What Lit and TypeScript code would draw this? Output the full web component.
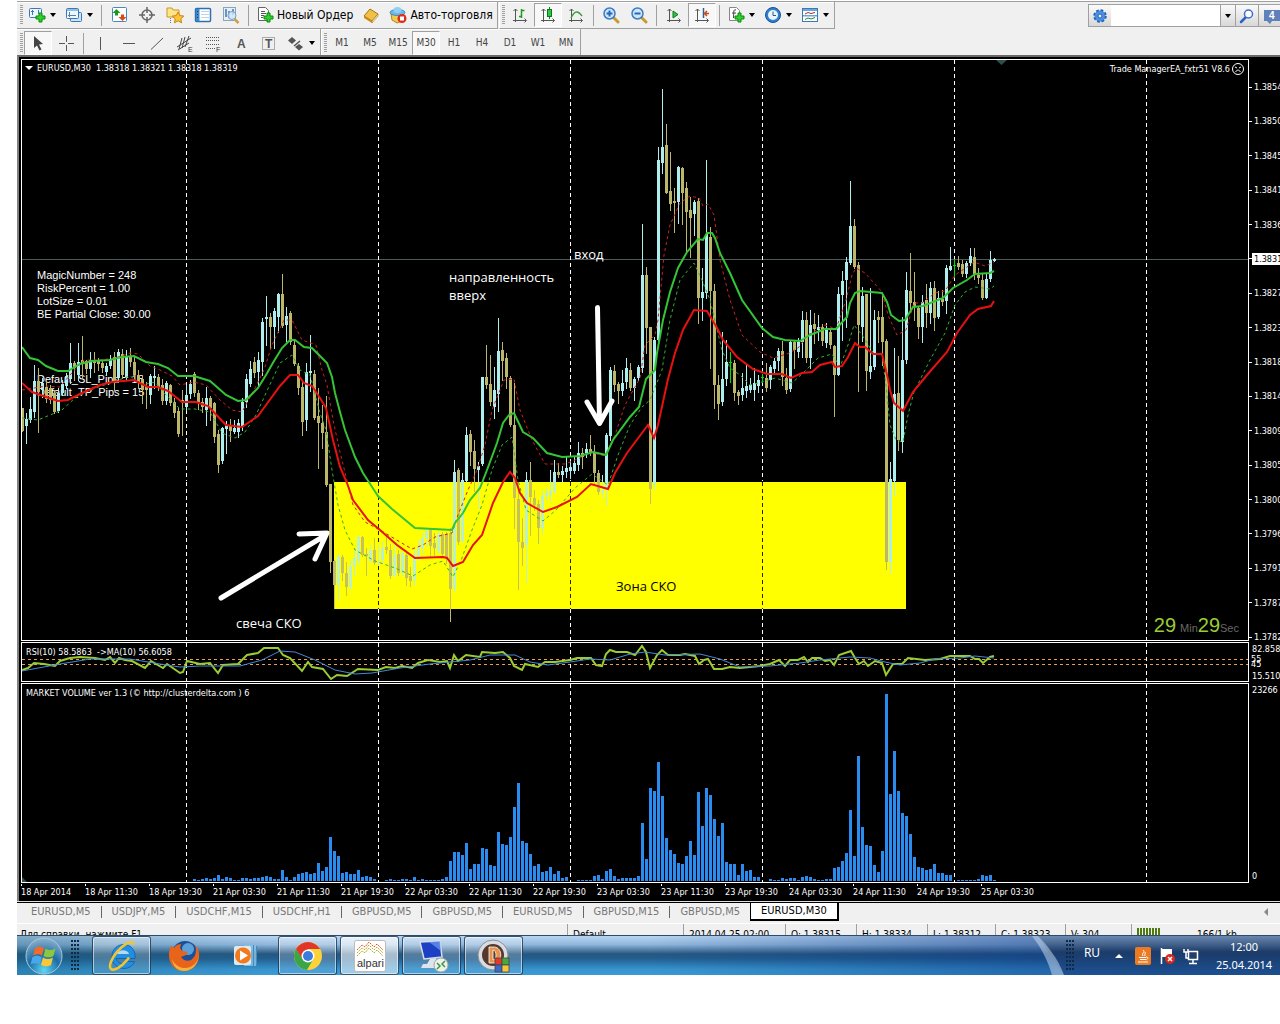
import { LitElement, html, svg, css, nothing } from "lit";
import { customElement } from "lit/decorators.js";

/* Candles as "type high top bottom low": u = rising, d = falling, n = unchanged. */
const CANDLES = `
d408 408 431 431|u413 419 426 443|u397 409 420 422|u365 381 412 417|d368 381 392 432|u378 383 390 397|d381 387 399 402|d385 388 400 403
d390 393 412 413|u388 393 411 412|u380 384 393 395|u373 376 386 388|u343 363 379 383|d361 363 368 380|u343 362 375 380|d336 360 364 378
d360 361 369 373|u352 360 369 377|d352 360 363 372|d358 361 364 370|d360 363 368 372|u363 366 372 375|u355 359 366 368|d352 357 382 390
u349 352 378 382|d349 354 375 378|u350 357 377 380|d348 356 362 366|d357 362 375 377|d370 375 382 388|d376 379 390 403|d382 386 390 408
u374 376 395 403|u366 376 378 388|d374 377 387 390|d379 385 401 404|u381 383 401 404|d384 385 403 405|d398 402 413 417|d407 411 434 436
d390 400 402 435|u385 395 407 410|u380 384 394 398|d372 374 393 396|d390 393 402 409|d398 402 407 412|u387 398 410 425|d396 398 408 420
d402 403 437 442|d430 434 465 472|u427 428 461 463|u421 425 429 453|d419 426 431 441|u420 428 432 433|u419 423 432 437|u398 402 427 430
u374 379 402 407|u361 369 384 386|d357 362 373 377|u352 360 372 385|u318 322 362 375|u296 317 319 345|d313 317 327 348|u308 311 327 348
u293 294 317 332|d274 294 326 327|u307 316 325 341|d311 313 342 344|d339 345 364 365|d363 366 388 394|d382 387 422 435|u363 372 420 430
u335 371 373 391|d370 374 418 419|d388 416 423 468|d405 423 433 448|d396 432 485 486|d484 484 562 572|d560 561 585 608|u554 556 585 600
d555 557 573 580|d562 573 587 595|u560 566 587 589|u548 558 566 575|u536 537 561 564|d536 537 555 556|d548 554 556 575|u545 550 561 562
d538 550 563 564|u545 562 563 565|u541 548 560 563|d536 547 550 553|d544 550 576 578|u545 555 576 577|d550 554 573 575|u552 553 573 575
d550 555 578 585|d567 576 581 586|u550 555 580 585|u540 547 556 560|u533 538 548 553|u529 531 538 546|d528 530 546 557|d533 543 548 555
u531 534 551 553|d532 534 554 555|d532 534 558 563|d528 533 589 621|u460 472 589 591|d468 470 542 544|u473 480 541 542|u427 435 481 481
d430 434 452 465|d440 451 469 491|u462 466 470 508|u377 377 464 465|d345 377 385 388|d355 384 402 405|u367 390 407 418|u318 351 394 411
d342 350 361 380|d353 358 377 388|d376 378 425 426|d383 425 498 528|d490 499 542 589|d518 542 548 565|u472 480 545 582|d462 480 497 535
d490 498 505 510|d500 504 528 543|u490 496 528 533|u488 493 496 500|u470 491 495 500|u460 472 492 493|d463 472 475 477|u466 471 475 482
u457 468 472 477|u462 467 471 478|u457 463 471 473|u442 453 465 470|d448 453 457 468|u443 449 453 457|d435 449 452 455|d445 453 473 485
d470 473 492 494|u475 490 493 497|u433 435 490 505|u367 370 436 440|d365 371 385 391|d382 384 391 403|u370 383 391 395|u358 368 382 388
d363 370 388 390|u377 379 388 400|u365 367 378 380|u224 275 368 372|d267 275 328 353|d327 327 489 503|u337 340 485 490|u147 160 340 345
u89 147 163 173|d124 145 193 193|d152 191 204 210|d188 201 203 232|u166 167 202 223|d167 168 193 224|d182 188 212 252|d197 210 218 257
u200 202 214 235|d198 201 298 323|u268 292 298 320|u160 234 293 298|d227 237 291 368|d284 291 385 408|d375 385 404 419|u332 379 402 405
u340 362 379 385|n352 362 363 382|d360 363 393 400|d390 392 396 404|u373 388 395 400|u365 386 391 397|u378 385 390 392|u368 383 390 400
u375 380 386 392|n374 377 378 382|d363 378 388 391|u365 367 380 388|u358 361 369 373|u348 351 361 370|d341 351 377 385|d368 378 390 393
u341 342 389 391|d341 342 350 368|u338 342 352 357|u311 320 342 357|d312 320 358 362|u310 325 358 368|d313 324 329 343|u315 327 330 340
d324 327 341 345|u323 328 343 347|d330 332 345 348|d345 346 375 416|u287 294 375 375|u271 281 295 340|u257 262 280 327|u181 226 263 264
d219 226 267 268|d262 265 325 391|u287 296 327 341|d294 294 371 390|u288 366 372 378|u310 320 367 369|d311 317 320 342|d293 317 342 365
d339 341 562 569|u462 479 562 573|u348 394 481 495|d356 393 440 450|u317 360 442 452|u272 290 360 363|d253 291 303 310|d272 302 306 320
d306 308 327 338|u295 302 327 342|d284 300 313 327|u282 288 313 323|d281 288 318 330|u291 298 317 318|d290 299 302 305|u265 268 301 313
u247 266 270 270|n259 265 266 277|d256 263 267 269|d260 264 274 276|u261 263 274 277|u248 256 263 265|d248 257 275 279|d268 275 278 283
d273 280 298 299|u273 279 298 298|u251 260 279 281|u258 259 261 261`
  .trim()
  .split(/[|\n]/)
  .map((s) => ({ kind: s[0], v: s.slice(1).split(" ").map(Number) }));

const GREEN = "22,347 30,358 38,360 46,366 58,371 68,371 80,364 92,361 110,360 122,357 134,356 146,362 158,364 168,368 178,376 194,376 210,381 226,395 238,401 246,400 258,388 266,375 274,361 282,348 290,340 295,340 304,347 312,348 320,356 327,363 332,377 335,393 340,412 345,430 355,457 363,473 378,496 392,509 415,528 452,530 455,523 463,513 470,500 480,488 487,470 497,443 503,423 509,415 514,413 523,432 533,438 547,453 562,457 580,456 593,452 606,455 613,440 630,417 639,407 646,379 655,370 657,353 663,320 670,292 678,268 687,252 698,239 703,240 707,233 712,233 715,238 720,253 730,273 742,300 762,328 773,337 785,340 800,341 810,335 825,329 836,329 847,317 850,303 855,293 860,291 882,293 887,302 891,315 899,321 905,320 913,307 923,306 943,298 953,288 967,280 975,274 990,273 994,271";
const RED = "22,383 32,392 46,397 58,401 68,400 80,394 100,385 112,382 134,380 148,387 158,387 168,391 182,402 196,402 208,406 226,425 242,427 258,416 266,405 280,386 290,375 298,375 304,383 312,386 320,398 326,408 333,440 340,467 347,483 353,500 368,520 380,530 397,545 415,558 443,557 447,558 453,566 463,562 473,545 482,535 493,503 503,482 510,472 515,478 520,493 527,503 543,512 557,507 577,497 591,484 608,489 615,473 627,453 639,437 648,425 654,438 658,425 668,379 675,353 683,330 694,310 707,311 717,328 723,340 737,357 753,369 767,374 782,374 791,378 802,373 812,372 820,365 832,362 835,367 842,366 848,357 855,343 860,347 865,347 873,354 882,354 888,379 890,390 894,403 903,411 913,392 927,375 947,352 957,333 970,315 978,309 991,306 994,301";
const RED_THIN = "22,390 34,388 46,386 60,387 70,375 84,360 100,360 115,358 130,353 138,354 150,366 160,370 172,376 180,385 194,382 206,385 220,400 232,410 242,412 254,390 264,370 272,345 284,320 292,320 302,340 316,345 322,370 327,385 333,420 340,452 353,505 365,522 380,530 400,542 412,549 423,545 435,537 452,533 458,515 468,490 477,470 485,445 492,410 504,380 514,379 520,410 532,440 545,464 565,464 580,458 590,452 605,456 615,435 625,405 640,378 645,345 655,335 658,320 664,255 670,225 680,203 690,196 699,198 703,206 708,204 714,215 720,260 730,300 742,335 760,352 773,358 787,354 798,348 808,335 825,325 836,329 846,300 852,275 856,268 865,273 882,292 888,315 897,335 906,330 914,303 922,303 935,293 945,291 955,275 967,267 974,262 985,266 994,262";
const GREEN_THIN = "22,418 38,420 50,415 62,410 75,398 90,390 110,383 130,376 142,385 155,382 166,395 180,409 195,409 210,412 222,433 235,438 245,432 256,415 266,393 280,363 292,355 300,370 310,375 320,413 326,430 332,470 338,505 345,530 355,550 375,561 395,568 413,576 430,565 443,561 453,577 462,558 472,530 482,505 492,470 502,445 512,437 518,480 526,510 543,521 556,510 575,488 592,474 608,485 618,455 630,425 642,407 650,400 662,370 670,320 680,280 694,263 702,280 710,300 716,325 722,350 730,368 740,375 750,385 762,382 775,378 792,383 803,373 818,358 832,354 840,367 848,345 854,325 862,335 874,354 882,354 886,385 890,425 896,440 903,442 908,415 914,392 930,360 945,333 955,305 965,292 975,287 990,289 994,286";
const RSI = "22,670 28,668 34,663 44,664 55,666 60,661 70,658 80,657 95,658 105,660 110,657 115,663 119,658 125,660 132,661 145,668 151,661 163,668 167,664 180,673 183,672 187,661 200,664 210,663 218,673 223,665 238,664 247,655 258,653 264,648 278,648 283,655 290,658 302,671 308,662 312,667 323,669 331,679 337,675 347,676 358,669 378,670 386,667 395,668 402,666 412,668 418,663 428,660 440,662 447,661 450,668 454,655 458,661 466,655 480,657 482,652 495,653 503,652 510,658 514,666 522,670 525,664 538,667 545,662 555,662 570,660 577,658 591,658 596,665 602,666 606,654 610,650 616,652 627,652 635,655 642,646 646,652 650,668 657,655 662,650 668,655 680,655 685,654 695,656 699,664 704,660 708,659 714,669 722,669 730,667 740,668 760,666 770,664 779,660 785,666 790,660 798,660 804,657 808,662 812,658 820,658 825,661 830,660 834,665 839,655 851,651 855,658 859,664 864,661 868,666 875,661 882,663 886,675 893,664 902,664 908,658 925,660 940,659 950,656 970,656 975,659 979,659 983,663 990,657 994,656";
const RSI_MA = "22,671 60,664 90,659 130,659 160,664 180,667 200,666 240,666 262,660 280,651 295,652 315,660 335,670 355,674 372,673 400,668 430,664 450,662 470,660 490,655 515,655 530,662 548,665 570,662 590,659 610,660 630,654 645,652 665,655 700,654 720,659 740,667 770,666 800,663 820,660 850,657 870,658 885,662 900,665 920,663 935,659 960,658 975,656 994,658";

/* Bar heights of the volume histogram; the first belongs to candle 43. */
const VOLUME = [
  2, 1, 2, 3, 2, 3, 6, 2, 4, 3, 1, 1, 3, 3, 2, 3, 3, 4, 5, 4, 2, 2, 11, 4, 1, 4, 7, 8, 9, 7, 8, 18, 10, 14, 44, 30, 25, 8, 9, 7, 7, 11, 4, 5, 4, 2, 0, 0,
  1, 2, 1, 1, 2, 2, 1, 4, 1, 2, 1, 1, 1, 1, 2, 4, 20, 29, 29, 26, 38, 12, 17, 17, 33, 32, 16, 15, 49, 37, 36, 44, 74, 98, 40, 38, 27, 15, 17, 9, 10, 14, 7, 10, 3, 4, 0, 0,
  1, 1, 1, 1, 5, 6, 2, 10, 12, 5, 2, 3, 3, 3, 3, 5, 58, 22, 93, 90, 119, 85, 43, 31, 27, 18, 17, 25, 40, 26, 89, 55, 93, 86, 62, 45, 58, 19, 17, 17, 6, 17, 10, 11, 4, 4, 0, 0,
  2, 1, 1, 3, 2, 3, 3, 1, 4, 5, 4, 2, 1, 1, 2, 2, 13, 14, 20, 28, 71, 25, 125, 54, 36, 35, 16, 9, 30, 187, 87, 130, 90, 68, 65, 47, 24, 14, 13, 11, 12, 17, 8, 8, 6, 6, 0,
  1, 1, 1, 1, 1, 2, 6, 5, 6, 1,
];

const DAYS = [186, 378, 570, 762, 954, 1146];
const PRICES = ["1.3854", "1.3850", "1.3845", "1.3841", "1.3836", "1.3831", "1.3827", "1.3823", "1.3818", "1.3814", "1.3809", "1.3805", "1.3800", "1.3796", "1.3791", "1.3787", "1.3782"];
const TIMES = ["18 Apr 2014", "18 Apr 11:30", "18 Apr 19:30", "21 Apr 03:30", "21 Apr 11:30", "21 Apr 19:30", "22 Apr 03:30", "22 Apr 11:30", "22 Apr 19:30", "23 Apr 03:30", "23 Apr 11:30", "23 Apr 19:30", "24 Apr 03:30", "24 Apr 11:30", "24 Apr 19:30", "25 Apr 03:30"];
const TABS = ["EURUSD,M5", "USDJPY,M5", "USDCHF,M15", "USDCHF,H1", "GBPUSD,M5", "GBPUSD,M5", "EURUSD,M5", "GBPUSD,M15", "GBPUSD,M5", "EURUSD,M30"];
const PERIODS = ["M1", "M5", "M15", "M30", "H1", "H4", "D1", "W1", "MN"];
const FILL: Record<string, string> = { u: "#afeeee", d: "#bdb76b", n: "#00e000" };

const plus = svg`<path d="M11 7h3v3h3v3h-3v3h-3v-3h-3v-3h3z" fill="#2fd02f" stroke="#0a8a0a"/>`;
const axes = svg`<path d="M4.5 3v13M2 14.5h13M2.500 5l2-2 2 2M13.500 12.500l2 2-2 2" fill="none" stroke="#555"/>`;
const lens = svg`<path d="M11 11l5 5" stroke="#c89a30" stroke-width="3" stroke-linecap="round"/><circle cx="7.500" cy="7.500" r="5.500" fill="#cfe6fa" stroke="#3a7cc4" stroke-width="1.500"/>`;

const ICONS: Record<string, unknown> = {
  newChart: svg`<rect x="1.500" y="2.500" width="12" height="9" rx="1" fill="#eef6fd" stroke="#3a78b8"/><path d="M4.500 4v5M3 5.500h3M10.500 4v4" stroke="#3a78b8"/>${plus}`,
  profiles: svg`<rect x="5.500" y="6.500" width="11" height="9" rx="1" fill="#cfe3f6" stroke="#3a78b8"/><rect x="1.500" y="2.500" width="12" height="10" rx="1" fill="#eef6fd" stroke="#3a78b8"/><path d="M2 3h11v2H2z" fill="#8fbce8"/><path d="M4.500 6v5M3 9.500h8" stroke="#5580aa"/>`,
  market: svg`<rect x="2.500" y="1.500" width="14" height="14" rx="1" fill="#fff" stroke="#4a86c0"/><path d="M6.500 3l4 4h-2.500v2.500h-3V7H2.500z" fill="#1c9a1c"/><path d="M12.500 15l-4-4H11V8.500h3V11h2.500z" fill="#dd4a1a"/>`,
  target: svg`<circle cx="9" cy="9" r="5" fill="none" stroke="#666" stroke-width="1.500"/><path d="M9 1v6M9 11v6M1 9h6M11 9h6" stroke="#666" stroke-width="1.500"/>`,
  folder: svg`<path d="M1 2h5l1 2h6v7H1z" fill="#ffe58a" stroke="#c79a20"/><path d="M12 6l1.800 3.600 4 .5-3 2.700.8 4-3.600-2-3.500 2 .7-4-2.900-2.700 4-.5z" fill="#ffc53a" stroke="#c98408"/><path d="M4.500 12v5" stroke="#777" stroke-dasharray="1 1"/>`,
  navigator: svg`<rect x="1.500" y="2.500" width="15" height="13" rx="1" fill="#fff" stroke="#2f6fb0" stroke-width="1.500"/><path d="M2 3h3.500v12H2z" fill="#3f87cc"/><path d="M7 5.500h8M7 8.500h8M7 11.500h8" stroke="#b8d4ec"/><path d="M3.500 5v8" stroke="#123a6a" stroke-dasharray="1 2"/>`,
  tester: svg`<rect x="1.500" y="1.500" width="12" height="13" fill="#e8eef4" stroke="#8aa4bc"/><path d="M4 3v8M7 5v7M11 3v6" stroke="#3a78b8" stroke-width="1.500"/><path d="M12.500 13l4 4" stroke="#d0a040" stroke-width="2.500"/><circle cx="10" cy="9.500" r="4" fill="#cfe6fa" fill-opacity=".8" stroke="#7aa0c4"/>`,
  order: svg`<path d="M2.500 1.500h7l3 3v10h-10z" fill="#fff" stroke="#666"/><path d="M5 5.500h4M5 7.500h5M5 9.500h3M5 11.500h2" stroke="#555"/>${plus}`,
  book: svg`<path d="M2 10l6-7 8 5-6 7z" fill="#f1c04a" stroke="#a87208"/><path d="M2 10l8 5v2l-8-5z" fill="#c88d18"/><path d="M10 15l6-7v2l-6 7z" fill="#fff3c8" stroke="#a87208" stroke-width=".6"/>`,
  auto: svg`<path d="M2 8h13l-2 7-5 2-5-3z" fill="#f0ca50" stroke="#b08a18"/><ellipse cx="8.500" cy="6.500" rx="7.500" ry="3" fill="#6db8e8" stroke="#3a88c0"/><ellipse cx="8.500" cy="4" rx="4" ry="3" fill="#8fd0f4"/><circle cx="13" cy="12.500" r="4.500" fill="#d8301c"/><rect x="11" y="10.500" width="4" height="4" fill="#fff"/>`,
  bars: svg`${axes}<path d="M10.500 3v9M8 10.500h2.500M10.500 4.500h3" stroke="#1c9a1c" stroke-width="1.500"/>`,
  candles: svg`${axes}<path d="M10.500 1v12" stroke="#1c7a1c"/><rect x="8.500" y="3.500" width="4" height="7" fill="#2cc84a" stroke="#0a7a1a"/>`,
  line: svg`${axes}<path d="M4 12c3-6 6-9 11-2" fill="none" stroke="#3a9a3a" stroke-width="1.500"/>`,
  zoomIn: svg`${lens}<path d="M4.500 7.500h6M7.500 4.500v6" stroke="#2468b4" stroke-width="2"/>`,
  zoomOut: svg`${lens}<path d="M4.500 7.500h6" stroke="#2468b4" stroke-width="2"/>`,
  scroll: svg`${axes}<path d="M8 5l5 3.500-5 3.500z" fill="#34c04a" stroke="#0a7a1a"/>`,
  shift: svg`${axes}<path d="M10.500 2v10" stroke="#2a60a0" stroke-width="1.500"/><path d="M16 7.500h-4M14 5l-2.500 2.500 2.500 2.500" fill="none" stroke="#c84a1a" stroke-width="1.500"/>`,
  indicators: svg`<path d="M2.500 1.500h7l3 3v10h-10z" fill="#fff" stroke="#888"/><path d="M9 4c-3-1-2 2-2.500 8M5 7h4" fill="none" stroke="#444"/>${plus}`,
  clock: svg`<circle cx="9" cy="9" r="7.500" fill="#2f7fd0" stroke="#1a5096"/><circle cx="9" cy="9" r="5" fill="#eaf4fc"/><path d="M9 5.500V9.500h3" fill="none" stroke="#2a5a8a"/>`,
  templates: svg`<rect x="1.500" y="2.500" width="15" height="13" fill="#fff" stroke="#3a78b8"/><path d="M2 3h14v2H2zM2 9h14v1.500H2z" fill="#6aa6dc"/><path d="M4 8l3-1.500 3 1 4-1" fill="none" stroke="#a03030"/><path d="M4 13.500l3-1.500 3 1 4-1.500" fill="none" stroke="#2a8a2a"/>`,
  cursor: svg`<path d="M5 2l9 8-4 .5 2.500 5-2 1-2.500-5L5 14z" fill="#444"/>`,
  cross: svg`<path d="M9.500 2v6M9.500 11v6M2 9.500h6M11 9.500h6" stroke="#555"/>`,
  vline: svg`<path d="M8.500 3v13" stroke="#555"/>`,
  hline: svg`<path d="M3 9.500h12" stroke="#555"/>`,
  trend: svg`<path d="M3 15.500L15 4" stroke="#555"/>`,
  channel: svg`<path d="M1 13L15 4M2 16L13 9M6 4L3 15M9 3L6 14M13 2L9 13" stroke="#444"/><text x="12" y="18" class="tiny">E</text>`,
  fibo: svg`<path d="M2 3.500h14M2 6.500h14M2 10.500h14M2 14.500h9" stroke="#555" stroke-dasharray="1 1"/><text x="12" y="18" class="tiny">F</text>`,
  textA: svg`<text x="5" y="14" class="glyph">A</text>`,
  label: svg`<rect x="2.500" y="3.500" width="12" height="12" fill="none" stroke="#666" stroke-dasharray="1 1"/><text x="5" y="14" class="glyph">T</text>`,
  shapes: svg`<path d="M5 3l4 3.500-4 3.500-4-3.500z" fill="#555"/><path d="M12 10l4 3-4 3.500-4-3.500z" fill="#555"/><path d="M7 12l6-5" stroke="#555" stroke-width="1.500"/>`,
};

const icon = (name: string) => html`<svg class="icon" width="18" height="18" viewBox="0 0 18 18" aria-hidden="true">${ICONS[name]}</svg>`;
const tool = (name: string, label: string, o: { menu?: boolean; on?: boolean; text?: string } = {}) =>
  html`<button class="tool ${o.menu ? "menu" : ""} ${o.on ? "on" : ""} ${o.text ? "wide" : ""}" aria-label=${label}>${icon(name)}${o.text ? html`<span>${o.text}</span>` : nothing}${o.menu ? html`<i class="caret"></i>` : nothing}</button>`;
const sep = html`<i class="sep"></i>`;
const grip = html`<i class="grip"></i>`;
const days = (top: number, bottom: number) => DAYS.map((x) => svg`<path d="M${x + 0.5} ${top}V${bottom}" stroke="#fff" stroke-dasharray="4 3"/>`);

@customElement("app-root")
export class AppRoot extends LitElement {
  static styles = css`
    :host { display: block; background: #fff; min-height: 100vh; overflow: hidden; font: 11px/14px "DejaVu Sans Condensed", "Noto Sans", sans-serif; color: #000; }
    * { box-sizing: border-box; }
    button { font: inherit; color: inherit; border: 0; padding: 0; background: none; }
    svg { display: block; }
    .screen { margin-left: 17px; padding-top: 1px; display: flex; flex-direction: column; overflow: hidden; }
    .bars { background: #f0f0f0; border-top: 1px solid #a0a0a0; height: 54px; display: flex; justify-content: space-between; }
    .row { display: flex; height: 27px; align-items: stretch; width: max-content; }
    .group { display: flex; align-items: center; padding-left: 3px; border-right: 1px solid #a0a0a0; border-bottom: 1px solid #a0a0a0; box-shadow: inset 0 1px #fff; }
    .row.second .group { border-bottom: 0; padding-top: 1px; }
    .group + .group { border-left: 1px solid #fff; margin-left: 1px; padding-left: 2px; }
    .row.second .group + .group { margin-left: 0; }
    .grip { width: 3px; height: 20px; margin-right: 1px; background: repeating-linear-gradient(#a0a0a0 0 1px, #f0f0f0 1px 2px); }
    .sep { width: 1px; height: 21px; margin: 0 3px; background: #a0a0a0; }
    .tool { width: 28px; height: 24px; display: flex; align-items: center; justify-content: center; white-space: nowrap; }
    .tool.on { background: #f8f8f8; border: 1px solid #fff; border-top-color: #a0a0a0; border-left-color: #a0a0a0; }
    .tool.menu { width: 37px; justify-content: flex-start; padding-left: 4px; }
    .tool.menu .caret { margin-left: 4px; }
    .tool.wide { width: auto; padding: 0 4px; gap: 3px; font-size: 12px; }
    .period { color: #444; font-size: 10px; }
    .caret { border: 3px solid transparent; border-top: 4px solid #000; border-bottom: 0; width: 0; }
    .tiny { font: 7px "Liberation Sans", sans-serif; fill: #333; }
    .glyph { font: bold 12px "Liberation Sans", sans-serif; fill: #555; }
    .find { display: flex; width: 192px; height: 23px; margin-top: 2px; border: 1px solid #a0a0a0; border-right: 0; overflow: hidden; }
    .find button { flex: none; width: 22px; display: grid; place-items: center; background: linear-gradient(#fafafa, #d8d8d8); }
    .find .drop { width: 16px; border-left: 1px solid #a0a0a0; border-right: 1px solid #a0a0a0; }
    .find .chat { border-left: 1px solid #a0a0a0; justify-content: start; padding-left: 4px; }
    .find input { flex: 1; min-width: 0; border: 0; padding: 0 4px; background: #fff; font: inherit; }
    .count { font: bold 10px "Liberation Sans", sans-serif; fill: #fff; }

    .window { background: #000; color: #fff; border-top: 2px solid #696969; border-left: 2px solid #808080; padding: 2px 0 0 2px; display: flex; flex-direction: column; gap: 1px; font-size: 9px; line-height: 12px; }
    .pane { display: flex; }
    .plot { position: relative; flex: 1; min-width: 0; border: 1px solid #fff; overflow: hidden; }
    .chart { width: 100%; }
    .price .chart { height: 580px; }
    .rsi .chart { height: 38px; }
    .vol .chart { height: 198px; }
    .scale { width: 31px; flex: none; position: relative; overflow: hidden; }
    .price .scale { display: flex; flex-direction: column; justify-content: space-between; padding-top: 22px; margin-bottom: -2px; }
    .mark { display: flex; align-items: center; gap: 2px; white-space: nowrap; }
    .mark::before { content: ""; flex: none; width: 3px; height: 1px; background: #fff; }
    .mark.now { gap: 0; }
    .mark.now span { background: #fff; color: #000; padding: 0 2px; }
    .rsi .scale, .vol .scale { display: flex; flex-direction: column; justify-content: space-between; padding: 1px 0 0 3px; }
    .vol .scale { padding-bottom: 1px; }
    .level { position: absolute; left: 2px; }
    .l55 { top: 11px; }
    .l45 { top: 16px; }
    .title { position: absolute; left: 4px; top: 3px; white-space: pre; }
    .price .title { display: flex; align-items: center; gap: 4px; left: 3px; top: 2px; }
    .title .caret { border: 4px solid transparent; border-top-color: #fff; border-bottom: 0; }
    .expert { position: absolute; right: 4px; top: 3px; display: flex; gap: 2px; align-items: center; white-space: nowrap; }
    .timer { position: absolute; right: 9px; bottom: 0; font: 11px/24px "Liberation Sans", sans-serif; color: #696969; display: flex; align-items: baseline; }
    .timer b { font-weight: normal; font-size: 20px; color: #9acd32; }
    .timer b:first-child { margin-right: 4px; }
    .info { font: 11px "Liberation Sans", sans-serif; fill: #fff; }
    .note { font: 13px "Open Sans", sans-serif; fill: #fff; }
    .note.dark { fill: #000; }
    .bar { shape-rendering: crispEdges; }
    .times { display: flex; height: 17px; overflow: hidden; }
    .times span { flex: none; width: 64px; white-space: nowrap; padding-top: 2px; position: relative; }
    .times span::before { content: ""; position: absolute; left: 0; top: 0; width: 1px; height: 2px; background: #fff; }

    .tabs { display: flex; align-items: center; background: #f0f0f0; height: 21px; border-top: 1px solid #000; box-shadow: 0 -1px #e0e0e0; padding: 0 0 2px 3px; color: #777; margin-top: 1px; }
    .tab { padding: 0 10px; border-right: 1px solid #666; line-height: 12px; white-space: nowrap; }
    .tab:first-child { padding-left: 11px; }
    .tab:nth-last-child(3) { border-right: 0; }
    .tab.on { align-self: stretch; background: #fff; color: #000; border: solid #000; border-width: 0 2px 2px 1px; }
    .back { margin: 0 12px 0 auto; border: 4px solid transparent; border-right: 4px solid #888; border-left: 0; width: 0; height: 8px; }
    .status { height: 12px; overflow: hidden; background: #f0f0f0; border-top: 1px solid #fff; display: grid; grid-template-columns: 1fr 116px 102px 71px 71px 68px 70px 66px 149px; font-size: 10px; }
    .cell { white-space: nowrap; padding: 4px 0 0 5px; border-left: 1px solid #a0a0a0; }
    .cell:first-child { border-left: 0; padding-left: 3px; }
    .net { display: flex; gap: 36px; }
    .signal { width: 24px; height: 8px; background: repeating-linear-gradient(90deg, #4f7a10 0 2px, #f0f0f0 2px 3px); }

    .taskbar { height: 40px; display: flex; align-items: stretch; border-top: 1px solid #2c4a6c; color: #fff; position: relative; overflow: hidden;
      background: linear-gradient(90deg, rgba(20, 90, 120, .35), transparent 20%, transparent 50%, rgba(10, 50, 130, .45) 80%, rgba(14, 44, 100, .6)), linear-gradient(#b9d5f0, #8fb6dc 22%, #26577f 46%, #225f90 58%, #3794cf 85%, #3c9ad4); }
    .streak { position: absolute; right: 0; top: 0; width: 250px; height: 39px; }
    .orb { width: 54px; display: grid; place-items: center; }
    .dots { width: 9px; margin: 4px 0 4px; background: radial-gradient(circle at 1px 1px, #0e2a44 1px, transparent 1px) 0 0 / 3px 4px; }
    .apps { display: flex; gap: 3px; padding-left: 12px; }
    .app { width: 59px; display: grid; place-items: center; border-radius: 3px; }
    .app.open { border: 1px solid rgba(20, 50, 80, .8); box-shadow: inset 0 0 0 1px rgba(255, 255, 255, .55); background: linear-gradient(rgba(255, 255, 255, .35), rgba(255, 255, 255, .08)); }
    .app.active { background: linear-gradient(rgba(255, 255, 255, .7), rgba(255, 255, 255, .5)); }
    .alpari { font: 11px "Liberation Sans", sans-serif; fill: #333; }
    .tray { margin-left: auto; display: flex; align-items: center; position: relative; font: 12px/18px "Noto Sans", sans-serif; }
    .tray .dots { align-self: stretch; margin-right: 8px; }
    .tray button { width: 24px; height: 24px; display: grid; place-items: center; }
    .tray .lang { width: 18px; margin-right: 6px; padding-bottom: 6px; }
    .clock { width: 77px; padding-left: 5px; text-align: center; font-size: 11px; }
  `;

  private priceChart() {
    return html`<svg class="chart" role="img" aria-label="EURUSD M30">
      <g transform="translate(-22 -60)">
        <rect x="334" y="482" width="572" height="127" fill="#ff0" />
        <path d="M22 259.500H1400" stroke="#4c5c5c" />
        <g class="info">
          <text x="37" y="279">MagicNumber = 248</text><text x="37" y="292">RiskPercent = 1.00</text>
          <text x="37" y="305">LotSize = 0.01</text><text x="37" y="318">BE Partial Close: 30.00</text>
          <text x="37" y="383">Default_SL_Pips = 15</text><text x="37" y="396">Default_TP_Pips = 15</text>
        </g>
        ${days(60, 481)}${days(609, 640)}
        ${DAYS.map((x) => svg`<path d="M${x + 0.5} 482V609" stroke=${x > 334 && x < 906 ? "#000" : "#fff"} stroke-dasharray="4 3"/>`)}
        <g class="bar">
          ${CANDLES.map(({ kind, v }, i) => {
            const x = 22 + i * 4;
            return svg`<rect x=${x} y=${v[0]} width="1" height=${v[3] - v[0] + 1} fill=${FILL[kind]}/><rect x=${x - 1} y=${v[1]} width="3" height=${Math.max(1, v[2] - v[1])} fill=${FILL[kind]}/>`;
          })}
        </g>
        <rect x="334" y="482" width="550" height="127" fill="#ff0" opacity=".14" />
        <g fill="none">
          <polyline points=${RED_THIN} stroke="#d02020" stroke-dasharray="3 3" />
          <polyline points=${GREEN_THIN} stroke="#32b032" stroke-dasharray="3 3" />
          <polyline points=${GREEN} stroke="#35c435" stroke-width="2" />
          <polyline points=${RED} stroke="#e81010" stroke-width="2" />
          <path d="M597.500 307.500L599.500 423M587 402l12.500 21.500L612 401M221 598L326 535M299 534l28-1-12 26" stroke="#fff" stroke-width="5" stroke-linecap="round" stroke-linejoin="round" />
        </g>
        <path d="M996 60h11l-5.500 5z" fill="#2f4f4f" />
        <text class="note" x="574" y="259">вход</text>
        <text class="note" x="449" y="282">направленность</text>
        <text class="note" x="449" y="300">вверх</text>
        <text class="note" x="236" y="628">свеча СКО</text>
        <text class="note dark" x="616" y="591">Зона СКО</text>
      </g>
    </svg>`;
  }

  private chartWindow() {
    return html`<main class="window">
      <section class="pane price">
        <div class="plot">
          ${this.priceChart()}
          <div class="title"><i class="caret"></i>EURUSD,M30  1.38318 1.38321 1.38318 1.38319</div>
          <div class="expert">Trade ManagerEA_fxtr51 V8.6
            <svg width="12" height="12" viewBox="0 0 12 12"><g fill="none" stroke="#fff"><circle cx="6" cy="6" r="5.500" /><path d="M3.500 9c1.500-2.500 3.500-2.500 5 0M3 4l2 1M9 4l-2 1" /></g></svg>
          </div>
          <div class="timer"><b>29</b>Min<b>29</b>Sec</div>
        </div>
        <div class="scale">${PRICES.map((p) => html`<div class="mark ${p === "1.3831" ? "now" : ""}"><span>${p}</span></div>`)}</div>
      </section>
      <section class="pane rsi">
        <div class="plot">
          <svg class="chart" role="img" aria-label="RSI"><g transform="translate(-22 -643)" fill="none">
            <path d="M22 659.500H1400M22 664.500H1400" stroke="#e8a048" stroke-dasharray="3 3" />
            ${days(643, 681)}
            <polyline points=${RSI} stroke="#9acd32" stroke-width="2" />
            <polyline points=${RSI_MA} stroke="#4488d8" />
          </g></svg>
          <div class="title">RSI(10) 58.5863  -&gt;MA(10) 56.6058</div>
        </div>
        <div class="scale"><span>82.858</span><span class="level l55">55</span><span class="level l45">45</span><span>15.510</span></div>
      </section>
      <section class="pane vol">
        <div class="plot">
          <svg class="chart" role="img" aria-label="Market volume"><g transform="translate(-22 -684)">
            ${days(684, 882)}
            <path d="M22 877l5 5h-5z" fill="#2f4f4f" />
            <g class="bar" fill="#2a8cf0">${VOLUME.map((h, i) => svg`<rect x=${193 + i * 4} y=${881 - h} width="3" height=${h}/>`)}</g>
          </g></svg>
          <div class="title">MARKET VOLUME ver 1.3 (© http://clusterdelta.com ) 6</div>
        </div>
        <div class="scale"><span>23266</span><span>0</span></div>
      </section>
      <div class="times">${TIMES.map((t) => html`<span>${t}</span>`)}</div>
    </main>`;
  }

  private toolbars() {
    return html`<header class="bars">
      <div>
        <div class="row">
          <div class="group">${grip}${tool("newChart", "Новый график", { menu: true })}${tool("profiles", "Профили", { menu: true })}${sep}
            ${tool("market", "Обзор рынка")}${tool("target", "Окно данных")}${tool("folder", "Избранное")}${tool("navigator", "Навигатор")}${tool("tester", "Тестер")}${sep}
            ${tool("order", "Новый Ордер", { text: "Новый Ордер" })}${tool("book", "MetaEditor")}${tool("auto", "Авто-торговля", { text: "Авто-торговля" })}
          </div>
          <div class="group">${grip}${tool("bars", "Бары")}${tool("candles", "Свечи", { on: true })}${tool("line", "Линия")}${sep}
            ${tool("zoomIn", "Приблизить")}${tool("zoomOut", "Отдалить")}${sep}${tool("scroll", "Автопрокрутка")}${tool("shift", "Сдвиг графика", { on: true })}${sep}
            ${tool("indicators", "Индикаторы", { menu: true })}${tool("clock", "Периоды", { menu: true })}${tool("templates", "Шаблоны", { menu: true })}
          </div>
        </div>
        <div class="row second">
          <div class="group">${grip}${tool("cursor", "Курсор", { on: true })}${tool("cross", "Перекрестие")}${sep}
            ${tool("vline", "Вертикальная линия")}${tool("hline", "Горизонтальная линия")}${tool("trend", "Трендовая линия")}${tool("channel", "Канал")}${tool("fibo", "Фибоначчи")}${tool("textA", "Текст")}${tool("label", "Метка")}${tool("shapes", "Стрелки", { menu: true })}
          </div>
          <div class="group">${grip}${PERIODS.map((p) => html`<button class="tool period ${p === "M30" ? "on" : ""}">${p}</button>`)}</div>
        </div>
      </div>
      <div class="find">
        <button aria-label="Настройки"><svg width="16" height="16" viewBox="0 0 16 16"><circle cx="8" cy="8" r="5.500" fill="#3f86dc" stroke="#2560b0" stroke-width="2.500" stroke-dasharray="2.600 1.700" /><circle cx="8" cy="8" r="5" fill="#4a90e4" /><circle cx="8" cy="8" r="2" fill="#e8f0fa" stroke="#2560b0" /></svg></button>
        <input type="text" aria-label="Поиск" />
        <button class="drop" aria-label="Список"><i class="caret"></i></button>
        <button aria-label="Найти"><svg width="16" height="16" viewBox="0 0 16 16"><path d="M7 9l-5 5" stroke="#2f62c0" stroke-width="2.500" stroke-linecap="round" /><circle cx="9.500" cy="6" r="4" fill="#fff" stroke="#3a6cd0" stroke-width="1.500" /></svg></button>
        <button class="chat" aria-label="Чат"><svg width="18" height="18" viewBox="0 0 18 18"><path d="M1 3h17v11H9l-2 3-3-3H1z" fill="#5f80b8" /><text class="count" x="6" y="12">4</text></svg></button>
      </div>
    </header>`;
  }

  private taskbar() {
    return html`<footer class="taskbar">
      <svg class="streak" viewBox="0 0 250 39" preserveAspectRatio="none" aria-hidden="true">
        <defs><linearGradient id="dk" x1="0" y1="0" x2="0" y2="1"><stop offset="0" stop-color="#6d8bb0" /><stop offset=".4" stop-color="#1c3a66" /><stop offset="1" stop-color="#1b4d90" /></linearGradient></defs>
        <path d="M8 0h242v39H34z" fill="url(#dk)" opacity=".85" /><path d="M2 0h6c8 8 20 22 26 39H22C18 24 10 10 2 0z" fill="#cfe0f2" opacity=".5" />
      </svg>
      <button class="orb" aria-label="Пуск"><svg width="38" height="38" viewBox="0 0 38 38">
        <defs><radialGradient id="orb" cx=".5" cy=".9" r=".9"><stop offset="0" stop-color="#5fd8f4" /><stop offset=".5" stop-color="#1c6ca4" /><stop offset="1" stop-color="#8fb4d0" /></radialGradient></defs>
        <circle cx="19" cy="19" r="18" fill="url(#orb)" stroke="#a8c8dc" />
        <path d="M10 11c3-2 6-2 9 0l-2 7.500c-3-2-6-1.500-9 0z" fill="#f06a2a" /><path d="M20.500 11.500c3 2 6 2 10 0l-2 7.500c-3 2-7 1.500-10 0z" fill="#8cc83c" />
        <path d="M7.500 20c3-2 6-2 9 0l-2 7.500c-3-2-6-1.500-9 0z" fill="#4aa8ea" /><path d="M18 20.500c3 2 6 2 10 0l-2 7.500c-3 2-7 1.500-10 0z" fill="#fac834" />
      </svg></button>
      <i class="dots"></i>
      <nav class="apps">
        <button class="app open" aria-label="Internet Explorer"><svg width="34" height="34" viewBox="0 0 34 34"><path d="M11 19.500h19c1-8-4-14-11-14s-12 5-12 12 5 12 12 12c5 0 9-3 10.500-7h-7c-3 4-11 2-11.500-3z" fill="#1f8fe4" stroke="#0e5ca8" stroke-width=".8" /><path d="M12 15c1-5 11-5 12 0z" fill="#b8d8f0" /><ellipse cx="17" cy="17" rx="17" ry="6.500" transform="rotate(-50 17 17)" fill="none" stroke="#f4c430" stroke-width="2.500" stroke-dasharray="62 14" stroke-dashoffset="-16" /></svg></button>
        <button class="app" aria-label="Firefox"><svg width="34" height="34" viewBox="0 0 34 34"><circle cx="18" cy="15" r="13" fill="#1d4f98" /><circle cx="21" cy="10" r="6" fill="#6cb4e8" opacity=".8" /><path d="M4 7c-5 10-1 24 12 25 11 0 17-9 16-18-1-4-2-6-4-8 2 6 1 12-4 15-4 2-8 0-10-3l5-2 2-3-6-1-2-3 1-4c-3 0-5 1-7 4z" fill="#e8641a" /><path d="M32 14c0 9-7 16-16 15-5-1-9-4-11-9 1 8 6 12 12 12 9 0 15-8 15-18z" fill="#fbb03a" /></svg></button>
        <button class="app" aria-label="Windows Media Player"><svg width="28" height="28" viewBox="0 0 28 28"><path d="M12 3h12v21H12z" fill="#8cc4e8" opacity=".8" /><path d="M21.500 3v21M24.500 4v19" stroke="#3f8cc4" /><rect x="2" y="4" width="17" height="19" rx="2" fill="#dfe9f0" /><circle cx="11" cy="13.500" r="8" fill="#f27a1c" /><path d="M8 8.500l8 5-8 5z" fill="#fff" /></svg></button>
        <button class="app open" aria-label="Google Chrome"><svg width="30" height="30" viewBox="0 0 30 30"><circle cx="15" cy="15" r="14" fill="#fbd23a" /><path d="M15 8h12.100a14 14 0 0 0-24.200 0l6 10z" fill="#e0372a" /><path d="M2.900 8a14 14 0 0 0 11 21l6.500-11h-11z" fill="#3aa648" /><circle cx="15" cy="15" r="6.500" fill="#fff" /><circle cx="15" cy="15" r="5" fill="#3b7ddd" /></svg></button>
        <button class="app open active" aria-label="Alpari"><svg width="32" height="32" viewBox="0 0 32 32"><rect x=".5" y=".5" width="31" height="31" rx="2" fill="#fff" stroke="#bbb" /><g fill="none" stroke-dasharray="2 1"><path d="M3 10l5-5 3 2 4-5 5 5 3-3 6 6" stroke="#d8582a" /><path d="M3 13l5-5 3 2 4-5 5 5 3-3 6 6" stroke="#d8a02a" /><path d="M3 16l5-5 3 2 4-5 5 5 3-3 6 6" stroke="#9cb82a" /></g><text class="alpari" x="3" y="27">alpari</text></svg></button>
        <button class="app open" aria-label="Подключение к удаленному рабочему столу"><svg width="34" height="34" viewBox="0 0 34 34"><path d="M5 3l20-1 2 16-18 2z" fill="#1c3fc4" stroke="#d8dee8" stroke-width="1.500" /><path d="M14 3l11-1 1 10z" fill="#6f9cf0" opacity=".7" /><path d="M15 20l6-1 1 6H12zM8 25h14v4H6z" fill="#dfe4ea" /><circle cx="26" cy="26" r="7" fill="#eef0ee" stroke="#a0a8a0" /><path d="M22 24l3 3-3 3M30 22l-3 3 3 3" fill="none" stroke="#3a9a3a" stroke-width="1.500" /></svg></button>
        <button class="app open" aria-label="Программа"><svg width="34" height="34" viewBox="0 0 34 34"><circle cx="16" cy="16" r="15" fill="#d8dde2" stroke="#8a9098" /><circle cx="16" cy="16" r="11" fill="#55392e" /><path d="M12 8h5c9 0 9 16 0 16h-5zM16 11v10c4 0 4-10 0-10" fill="#e8924a" stroke="#fff" stroke-width=".8" /><g stroke="#444" stroke-width=".8"><path d="M18 19h7v7h-7z" fill="#e03a2a" /><path d="M25 19h7v7h-7z" fill="#4aa83a" /><path d="M18 26h7v7h-7z" fill="#3a6ad0" /><path d="M25 26h7v7h-7z" fill="#f4c83a" /></g></svg></button>
      </nav>
      <div class="tray">
        <i class="dots"></i>
        <button class="lang">RU</button>
        <button aria-label="Скрытые значки"><svg width="8" height="5"><path d="M0 5l4-4 4 4z" fill="#fff" /></svg></button>
        <button aria-label="Java"><svg width="16" height="18" viewBox="0 0 16 18"><rect width="16" height="18" rx="2" fill="#ec7a22" /><path d="M8 3c3 2-2 3 0 6M10 5c1 2-1 2 0 4M4 10.500h7M5 12.500h6M3 15h10M11 10c3 0 2 2 0 3" fill="none" stroke="#fff" /></svg></button>
        <button aria-label="Центр поддержки"><svg width="18" height="18" viewBox="0 0 18 18"><path d="M3.500 1v16" stroke="#fff" stroke-width="1.500" /><path d="M4 2h10v8H4z" fill="#fff" /><circle cx="12" cy="12" r="5" fill="#d8281c" /><path d="M10 10l4 4M14 10l-4 4" stroke="#fff" stroke-width="1.500" /></svg></button>
        <button aria-label="Сеть"><svg width="18" height="18" viewBox="0 0 18 18"><path d="M6.500 4.500h9v8h-9zM11 13v3M7 16.500h8" fill="#23406a" stroke="#fff" stroke-width="1.500" /><path d="M2 2v3h4V2M4 5v6h2" fill="none" stroke="#fff" stroke-width="1.500" /></svg></button>
        <div class="clock">12:00<br />25.04.2014</div>
      </div>
    </footer>`;
  }

  render() {
    return html`<div class="screen">
      ${this.toolbars()}${this.chartWindow()}
      <nav class="tabs">${TABS.map((t, i) => html`<button class="tab ${i === 9 ? "on" : ""}">${t}</button>`)}<i class="back"></i></nav>
      <div class="status">
        <span class="cell">Для справки, нажмите F1</span><span class="cell">Default</span><span class="cell">2014.04.25 02:00</span><span class="cell">O: 1.38315</span><span class="cell">H: 1.38334</span><span class="cell">L: 1.38312</span><span class="cell">C: 1.38323</span><span class="cell">V: 304</span>
        <span class="cell net"><i class="signal"></i>166/1 kb</span>
      </div>
      ${this.taskbar()}
    </div>`;
  }
}
